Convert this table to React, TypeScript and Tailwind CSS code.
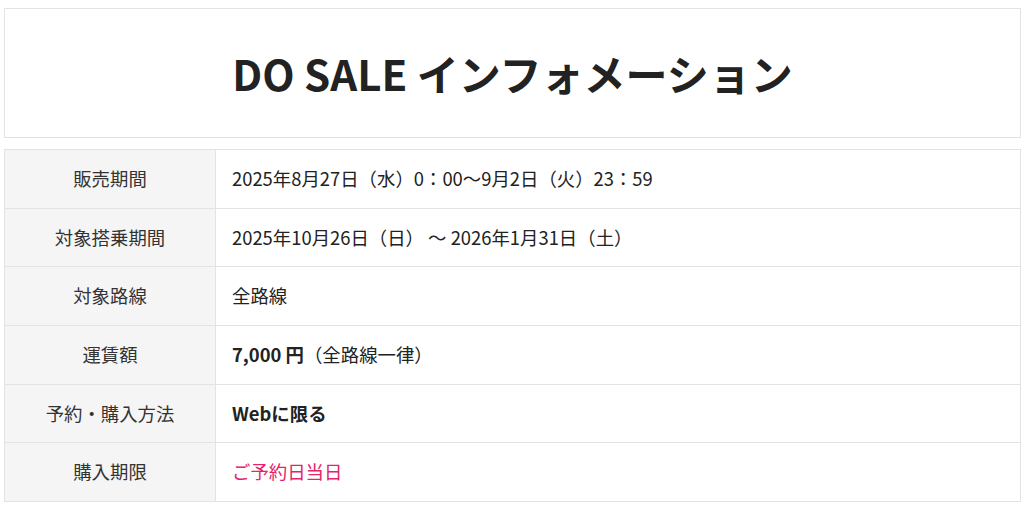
const ROWS: { label: string; value: React.ReactNode }[] = [
  { label: "販売期間", value: "2025年8月27日（水）0：00〜9月2日（火）23：59" },
  { label: "対象搭乗期間", value: "2025年10月26日（日） 〜 2026年1月31日（土）" },
  { label: "対象路線", value: "全路線" },
  {
    label: "運賃額",
    value: (
      <>
        <span className="font-bold">7,000 円</span>（全路線一律）
      </>
    ),
  },
  { label: "予約・購入方法", value: <span className="font-bold">Webに限る</span> },
  { label: "購入期限", value: <span className="text-[#e2246a]">ご予約日当日</span> },
];

export default function App() {
  return (
    <div
      className="bg-white pt-[8px] pl-[4px] text-[#222]"
      style={{ fontFamily: '"Noto Sans CJK JP", "Noto Sans", sans-serif' }}
    >
      <div className="w-[1017px]">
        <div className="flex h-[130px] items-center justify-center border border-[#e3e3e3] bg-white">
          <h1 className="text-[42px] font-bold leading-none">
            DO SALE インフォメーション
          </h1>
        </div>

        <table className="mt-[11px] w-full border-collapse text-[18.4px]">
          <tbody>
            {ROWS.map((r) => (
              <tr key={r.label}>
                <th className="w-[211px] border border-[#e3e3e3] bg-[#f5f5f5] py-[15px] text-center font-normal leading-[27.67px] text-[#333]">
                  {r.label}
                </th>
                <td className="border border-[#e3e3e3] bg-white py-[15px] pl-[16px] text-left leading-[27.67px]">
                  {r.value}
                </td>
              </tr>
            ))}
          </tbody>
        </table>
      </div>
    </div>
  );
}
